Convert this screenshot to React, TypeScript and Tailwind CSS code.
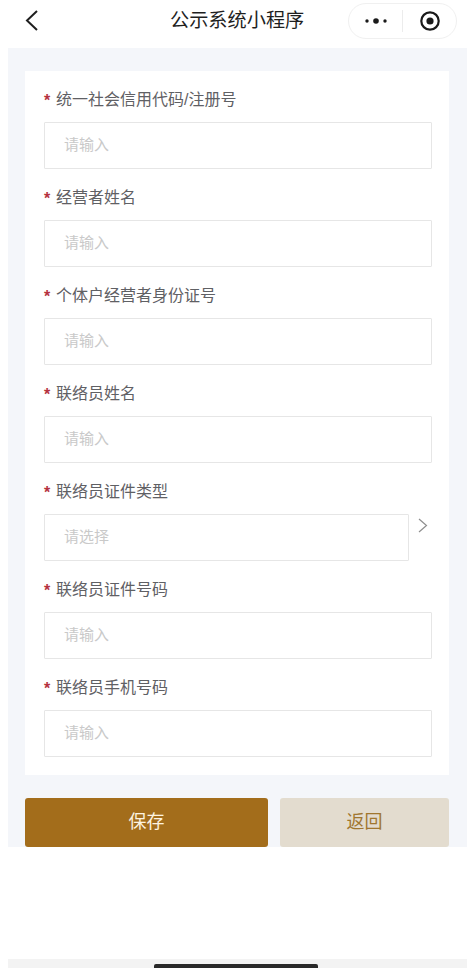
const FONT = '"Liberation Sans", "Noto Sans CJK SC", sans-serif';

const fields = [
  { label: "统一社会信用代码/注册号", placeholder: "请输入" },
  { label: "经营者姓名", placeholder: "请输入" },
  { label: "个体户经营者身份证号", placeholder: "请输入" },
  { label: "联络员姓名", placeholder: "请输入" },
  { label: "联络员证件类型", placeholder: "请选择", select: true },
  { label: "联络员证件号码", placeholder: "请输入" },
  { label: "联络员手机号码", placeholder: "请输入" },
];

function Field({ label, placeholder, select }: { label: string; placeholder: string; select?: boolean }) {
  return (
    <div className="flex flex-col">
      <div className="flex h-6 items-center mb-[11px] text-[16px] text-[#5f6064]">
        <span className="w-3 text-[16px] font-bold text-[#b5323f] leading-none pt-1">*</span>
        <span className="pt-0.5">{label}</span>
      </div>
      <div className="flex items-start">
        <div
          className={`h-[47px] flex items-center pl-[19px] border border-[#e6e6e6] rounded-[1px] bg-white text-[15px] text-[#c9c9c9] ${
            select ? "w-[365px]" : "w-[388px]"
          }`}
        >
          {placeholder}
        </div>
        {select && (
          <svg className="ml-[7px] mt-0.5" width="14" height="18" viewBox="0 0 14 18" fill="none">
            <path d="M3 3 L10.5 9.5 L3 16" stroke="#8f8f8f" strokeWidth="1.2" />
          </svg>
        )}
      </div>
    </div>
  );
}

export default function App() {
  return (
    <div className="w-[475px] h-[968px] bg-white flex flex-col overflow-hidden" style={{ fontFamily: FONT }}>
      <div className="h-12 flex items-start relative shrink-0">
        <svg className="ml-[24px] mt-[9px]" width="16" height="24" viewBox="0 0 16 24" fill="none">
          <path d="M13 2 L3 11.5 L13 21" stroke="#1f1f1f" strokeWidth="2" />
        </svg>
        <div className="absolute left-[170px] top-[8px] text-[19.2px] leading-[26px] text-[#1f1f1f]">公示系统小程序</div>
        <div className="absolute left-[348px] top-[3px] w-[109px] h-9 rounded-full border border-[#f0f0f0] flex items-center">
          <svg className="ml-[15px]" width="24" height="8" viewBox="0 0 24 8" fill="#1a1a1a">
            <circle cx="3" cy="4" r="1.7" />
            <circle cx="12" cy="4" r="2.8" />
            <circle cx="21" cy="4" r="1.7" />
          </svg>
          <div className="w-px h-[22px] bg-[#ececec] ml-[14px]" />
          <svg className="ml-[16px]" width="22" height="22" viewBox="0 0 22 22" fill="none">
            <circle cx="11" cy="11" r="8.7" stroke="#1a1a1a" strokeWidth="2.2" />
            <circle cx="11" cy="11" r="3.6" fill="#1a1a1a" />
          </svg>
        </div>
      </div>

      <div className="mx-2 w-[459px] h-[799px] bg-[#f4f6fa] px-[17px] pt-[23px] shrink-0">
        <div className="bg-white w-[424px] h-[704px] pt-4 pl-[19px] flex flex-col gap-4">
          {fields.map((f) => (
            <Field key={f.label} {...f} />
          ))}
        </div>
        <div className="flex gap-3 mt-[23px] w-[424px]">
          <div className="w-[243px] h-[49px] rounded-[3px] bg-[#a36d1b] text-[#fdf3e0] text-[18px] flex items-center justify-center">
            保存
          </div>
          <div className="w-[169px] h-[49px] rounded-[3px] bg-[#e3dccf] text-[#a0762f] text-[18px] flex items-center justify-center">
            返回
          </div>
        </div>
      </div>

      <div className="flex-1" />
      <div className="mx-2 w-[459px] h-[9px] bg-[#f3f3f3] flex justify-center items-end shrink-0">
        <div className="w-[164px] h-1 rounded-t-[2px] bg-[#2a2a2a] mr-1" />
      </div>
    </div>
  );
}
